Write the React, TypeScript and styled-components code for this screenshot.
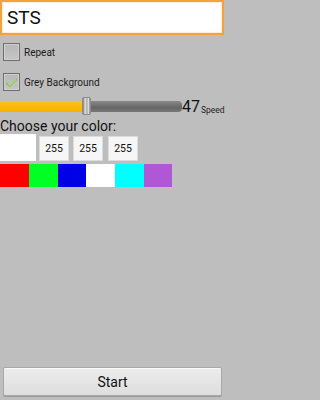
import React from "react";
import styled, { createGlobalStyle } from "styled-components";

const Global = createGlobalStyle`
  html, body { margin: 0; padding: 0; background: #bfbebf; }
  body { font-family: Roboto, "Noto Sans", "Liberation Sans", sans-serif; }
`;

const Page = styled.div`
  width: 225px;
  height: 400px;
  display: flex;
  flex-direction: column;
  background: #bfbebf;
  overflow: hidden;
`;

const TitleInput = styled.div`
  height: 31px;
  margin: 0 1px 0 0;
  border: 2px solid #f3a33c;
  background: #ffffff;
  display: flex;
  align-items: center;
  padding-left: 5px;
  font-size: 19px;
  color: #111;
  box-shadow: inset 0 0 2px #f7c37c;
`;

const CheckRow = styled.div<{ $top: number }>`
  display: flex;
  align-items: center;
  gap: 4px;
  margin-top: ${(p) => p.$top}px;
  padding-left: 3px;
  height: 18px;
`;

const Box = styled.div`
  width: 15px;
  height: 16px;
  border: 1px solid #6f6f6f;
  background: linear-gradient(#b9b8b9, #c6c5c6);
  box-shadow: inset 0 0 0 1px #d0cfd0;
  display: flex;
  align-items: center;
  justify-content: center;
`;

const Label = styled.span`
  font-size: 10px;
  color: #1a1a1a;
`;

const SeekRow = styled.div`
  display: flex;
  align-items: flex-end;
  margin-top: 6px;
  height: 18px;
`;

const Track = styled.div`
  position: relative;
  width: 182px;
  height: 18px;
  display: flex;
  align-items: center;
`;

const TrackBar = styled.div`
  width: 182px;
  height: 11px;
  border-radius: 0 4px 4px 0;
  background: linear-gradient(#8a8a8a, #666666 60%, #777);
  overflow: hidden;
  display: flex;
`;

const Fill = styled.div`
  height: 100%;
  background: linear-gradient(#ffc21a, #f7b200);
`;

const Thumb = styled.div`
  position: absolute;
  top: 0;
  width: 9px;
  height: 18px;
  border-radius: 2px;
  background: linear-gradient(90deg, #777 0%, #e4e4e4 30%, #a9a9a9 55%, #e0e0e0 80%, #7a7a7a 100%);
  border: 1px solid #8a8a8a;
  box-sizing: border-box;
`;

const Value = styled.span`
  font-size: 16px;
  line-height: 16px;
  color: #111;
`;

const Unit = styled.span`
  font-size: 8.5px;
  line-height: 10px;
  color: #222;
  margin-left: 1px;
`;

const Heading = styled.div`
  font-size: 14px;
  color: #111;
  margin-top: 3px;
  line-height: 16px;
`;

const InputRow = styled.div`
  display: flex;
  align-items: flex-end;
  height: 27px;
`;

const Preview = styled.div`
  width: 36px;
  height: 27px;
  background: #ffffff;
  margin-right: 3px;
`;

const NumBox = styled.div<{ $gap: number }>`
  width: 30px;
  height: 25px;
  margin-right: ${(p) => p.$gap}px;
  background: #f6f6f6;
  border: 1px solid #dcdcdc;
  box-sizing: border-box;
  display: flex;
  align-items: center;
  justify-content: center;
  font-size: 10.5px;
  color: #111;
`;

const Swatches = styled.div`
  display: flex;
  margin-top: 3px;
  height: 23px;
`;

const Swatch = styled.div<{ $c: string; $w: number }>`
  width: ${(p) => p.$w}px;
  height: 100%;
  background: ${(p) => p.$c};
`;

const Spacer = styled.div`
  flex: 1;
`;

const StartButton = styled.div`
  margin: 0 3px 4px 3px;
  height: 27px;
  border: 1px solid #a8a8a8;
  border-radius: 2px;
  background: linear-gradient(#ececec, #dedede);
  box-shadow: inset 0 1px 0 #f8f8f8, 0 1px 0 #9a9a9a;
  display: flex;
  align-items: center;
  justify-content: center;
  font-size: 14px;
  color: #111;
`;

const swatches: [string, number][] = [
  ["#ff0000", 29],
  ["#00ff22", 29],
  ["#0000e6", 28],
  ["#ffffff", 29],
  ["#00ffff", 29],
  ["#b057d6", 28],
];

export default function App() {
  const value = 47;
  const pct = 82 / 182;
  return (
    <>
      <Global />
      <Page>
        <TitleInput>STS</TitleInput>
        <CheckRow $top={8}>
          <Box />
          <Label>Repeat</Label>
        </CheckRow>
        <CheckRow $top={12}>
          <Box>
            <svg width="13" height="12" viewBox="0 0 13 12">
              <path d="M1 6 L5 10 L12 2 L12 4 L5 11 L1 8 Z" fill="#7cc43a" />
              <path d="M2 6 L5 9 L11 3 L11 5 L5 10 L2 7 Z" fill="#9bdc5a" />
            </svg>
          </Box>
          <Label>Grey Background</Label>
        </CheckRow>
        <SeekRow>
          <Track>
            <TrackBar>
              <Fill style={{ width: `${pct * 100}%` }} />
            </TrackBar>
            <Thumb style={{ left: 82 }} />
          </Track>
          <Value>{value}</Value>
          <Unit>Speed</Unit>
        </SeekRow>
        <Heading>Choose your color:</Heading>
        <InputRow>
          <Preview />
          <NumBox $gap={4}>255</NumBox>
          <NumBox $gap={5}>255</NumBox>
          <NumBox $gap={0}>255</NumBox>
        </InputRow>
        <Swatches>
          {swatches.map(([c, w], i) => (
            <Swatch key={i} $c={c} $w={w} />
          ))}
        </Swatches>
        <Spacer />
        <StartButton>Start</StartButton>
      </Page>
    </>
  );
}
